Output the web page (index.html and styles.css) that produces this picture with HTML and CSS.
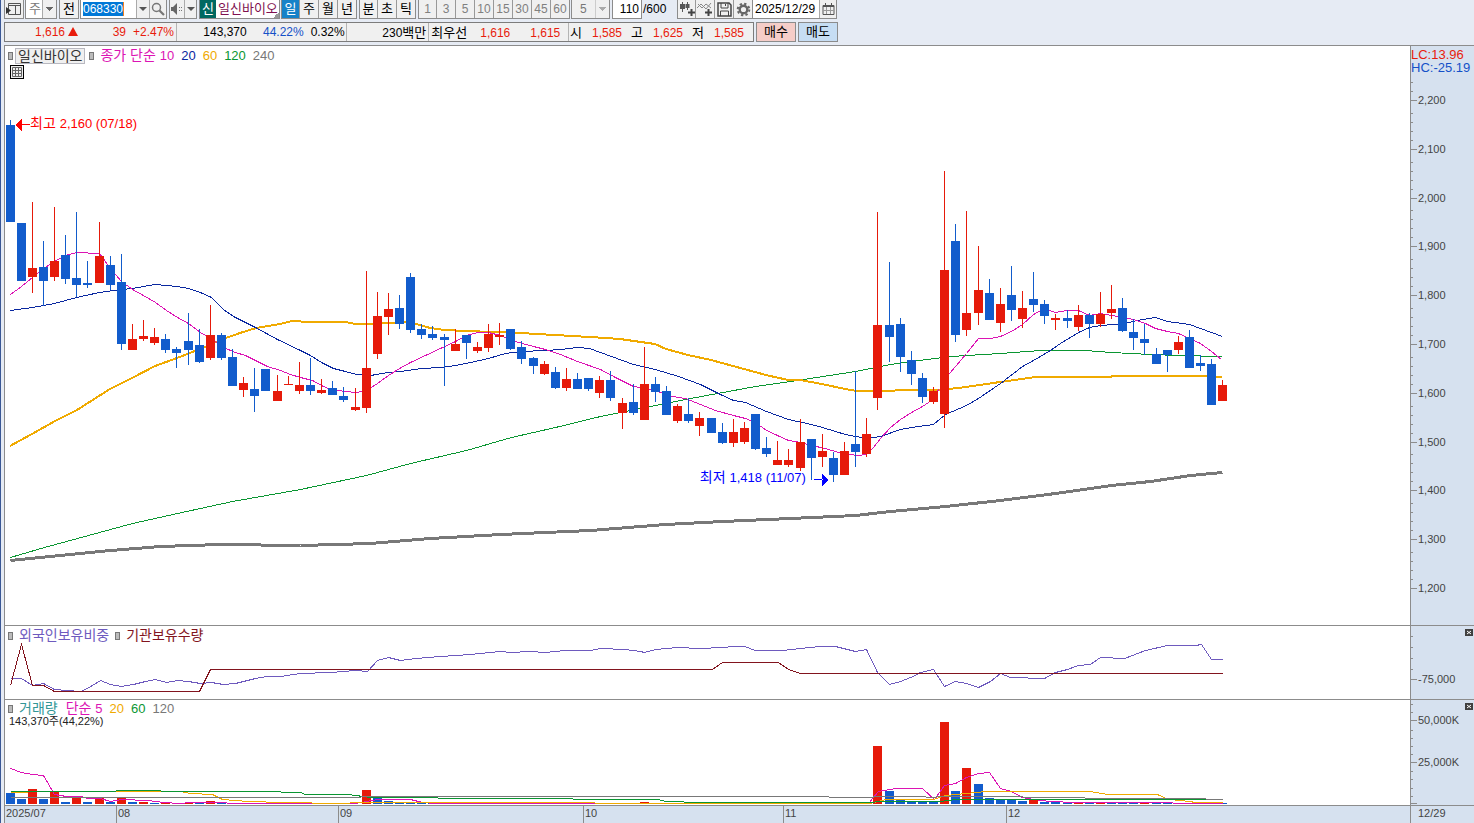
FILE: index.html
```html
<!DOCTYPE html>
<html lang="ko">
<head>
    <meta charset="UTF-8">
    <meta name="viewport" content="width=device-width, initial-scale=1.0">
    <title>일신바이오 - 일봉 차트</title>
    <link rel="stylesheet" href="styles.css">
</head>
<body>
    <header class="toolbar">
        <button type="button" class="tool" aria-label="패널"><svg width="16" height="14" viewBox="0 0 16 14"><path d="M2.500 1.500h12v11h-12zM2.500 3.500h12M9.500 3.500v9" fill="none" stroke="#555"/><path d="M0 5l5 3.500L0 12z" fill="#333"/></svg></button>
        <div class="pick pick-type"><select aria-label="종류"><option>주</option></select></div>
        <button type="button" class="tool tool-all">전</button>
        <div class="code">
            <input type="text" value="068330" aria-label="종목코드">
            <button type="button" class="arrow" aria-label="목록"></button>
            <button type="button" class="find" aria-label="검색"><svg width="14" height="14" viewBox="0 0 14 14" fill="none" stroke="#777"><circle cx="5.500" cy="5.500" r="4" stroke-width="1.500"/><path d="M8.500 8.500l4.500 4.500" stroke-width="2.200"/></svg></button>
        </div>
        <div class="sound">
            <button type="button" class="find" aria-label="소리"><svg width="14" height="14" viewBox="0 0 14 14"><path d="M1 5h2l4-4v12L3 9H1z" fill="#666"/><path d="M9 5h1v1H9zM11 5h1v1h-1zM9 8h1v1H9zM11 8h1v1h-1z" fill="#777"/></svg></button>
            <button type="button" class="arrow" aria-label="소리 설정"></button>
        </div>
        <div class="stock"><span class="stock-badge">신</span><span class="stock-name">일신바이오</span></div>
        <div class="group">
            <button type="button" class="on">일</button><button type="button">주</button><button type="button">월</button><button type="button">년</button>
        </div>
        <div class="group">
            <button type="button">분</button><button type="button">초</button><button type="button">틱</button>
        </div>
        <div class="group group-num">
            <button type="button">1</button><button type="button">3</button><button type="button">5</button><button type="button">10</button><button type="button">15</button><button type="button">30</button><button type="button">45</button><button type="button">60</button>
        </div>
        <div class="pick pick-num"><select aria-label="간격" disabled><option>5</option></select></div>
        <div class="count"><input type="text" value="110" id="count"><label for="count">/600</label></div>
        <div class="group group-icon">
            <button type="button" aria-label="봉 추가"><svg width="16" height="15" viewBox="0 0 16 15"><path d="M3.500 0v10M8.500 0v8" stroke="#555"/><path d="M1 2h5v5H1zM6.500 2h4v4h-4z" fill="#555"/><path d="M12.500 7v7M9 10.500h7" stroke="#444" stroke-width="2"/></svg></button>
            <button type="button" aria-label="지표 추가"><svg width="16" height="15" viewBox="0 0 16 15" fill="none"><path d="M0 6l4-4 5 5 5-6M1 2l4 4 4-4 5 4" stroke="#888"/><path d="M11.500 7v7M8 10.500h7" stroke="#444" stroke-width="2"/></svg></button>
            <button type="button" aria-label="저장"><svg width="15" height="15" viewBox="0 0 15 15" fill="none" stroke="#444"><path d="M1 1h11l2 2v11H1z" stroke-width="1.500"/><path d="M4 1v5h7V1M3.500 14V9h8v5M8.500 2v2"/></svg></button>
            <button type="button" aria-label="설정"><svg width="15" height="15" viewBox="0 0 15 15" fill="none" stroke="#666"><circle cx="7.500" cy="7.500" r="3.800" stroke-width="2.400"/><circle cx="7.500" cy="7.500" r="5.800" stroke-width="2" stroke-dasharray="2.300 2.250"/></svg></button>
        </div>
        <div class="date">
            <input type="text" value="2025/12/29" aria-label="날짜">
            <button type="button" class="find" aria-label="달력"><svg width="13" height="12" viewBox="0 0 13 12" fill="none" stroke="#555"><path d="M1 2.500h11v9H1z"/><path d="M1 3h11" stroke-width="2"/><path d="M3.500 0v3M9.500 0v3"/><path d="M1 7.500h11M4.500 4v7M8.500 4v7" stroke="#999"/></svg></button>
        </div>
    </header>

    <div class="quote">
        <div class="quote-bar">
            <div class="cell cell-price">
                <span class="up">1,616</span><i class="triangle"></i><span class="up diff">39</span><span class="up rate">+2.47%</span>
            </div>
            <div class="cell cell-volume">
                <span class="total">143,370</span><span class="turn">44.22%</span><span class="ratio">0.32%</span>
            </div>
            <div class="cell cell-amount"><span>230<b>백만</b></span></div>
            <div class="cell cell-best">
                <b>최우선</b><span class="up">1,616</span><span class="up">1,615</span>
            </div>
            <div class="cell cell-ohl">
                <b>시</b><span class="up">1,585</span><b>고</b><span class="up">1,625</span><b>저</b><span class="up">1,585</span>
            </div>
        </div>
        <button type="button" class="order buy">매수</button>
        <button type="button" class="order sell">매도</button>
    </div>

    <main class="board">
        <section class="panel panel-price">
            <svg class="plot" id="price" viewBox="5 46 1405 579" preserveAspectRatio="none"></svg>
            <div class="legend">
                <i class="mark"></i><span class="chip">일신바이오</span><i class="mark"></i>
                <span class="ma10">종가 단순 <em>10</em></span><em class="ma20">20</em><em class="ma60">60</em><em class="ma120">120</em><em class="ma240">240</em>
            </div>
            <button type="button" class="grid-button" aria-label="표"><svg width="10" height="10" viewBox="0 0 10 10" fill="none" stroke="#666"><path d="M.5.5h9v9h-9zM3.500 0v10M6.500 0v10M0 3.500h10M0 6.500h10"/></svg></button>
            <span class="note note-high">최고 <em>2,160 (07/18)</em></span>
            <span class="note note-low">최저 <em>1,418 (11/07)</em></span>
        </section>
        <aside class="axis">
            <svg class="scale" id="price-scale"></svg>
            <div class="limits"><span class="lc">LC:13.96</span><span class="hc">HC:-25.19</span></div>
        </aside>

        <section class="panel">
            <svg class="plot" id="holding" viewBox="5 626 1405 73" preserveAspectRatio="none"></svg>
            <div class="legend">
                <i class="mark"></i><span class="foreign">외국인보유비중</span><i class="mark"></i><span class="agency">기관보유수량</span>
            </div>
        </section>
        <aside class="axis">
            <svg class="scale" id="holding-scale"></svg>
            <button type="button" class="close" aria-label="닫기"><svg width="8" height="7" viewBox="0 0 8 7"><path d="M2 2l4 3M6 2L2 5" stroke="#fff"/></svg></button>
        </aside>

        <section class="panel">
            <svg class="plot" id="volume" viewBox="5 700 1405 105" preserveAspectRatio="none"></svg>
            <div class="legend legend-volume">
                <i class="mark"></i><span class="vol">거래량</span><span class="ma10">단순 <em>5</em></span><em class="ma60">20</em><em class="ma120">60</em><em class="ma240">120</em>
            </div>
            <p class="volume-text">143,370주(44,22%)</p>
        </section>
        <aside class="axis">
            <svg class="scale" id="volume-scale"></svg>
            <button type="button" class="close" aria-label="닫기"><svg width="8" height="7" viewBox="0 0 8 7"><path d="M2 2l4 3M6 2L2 5" stroke="#fff"/></svg></button>
        </aside>

        <div class="months">
            <span>2025/07</span><span>08</span><span>09</span><span>10</span><span>11</span><span>12</span>
        </div>
        <div class="today">12/29</div>
    </main>

    <script src="chart.js"></script>
</body>
</html>
```
FILE: styles.css
```css
* {
    box-sizing: border-box;
}
body {
    margin: 0;
    height: 100vh;
    display: flex;
    flex-direction: column;
    overflow: hidden;
    background-color: #e6ebf4;
    border-left: 1px solid #3a5795;
    font-family: "Liberation Sans", "Noto Sans CJK KR", sans-serif;
    font-size: 12px;
    color: #000;
}
button, input, select {
    font: inherit;
    color: inherit;
    margin: 0;
    padding: 0;
    border: 0;
    border-radius: 0;
    background: none;
}
em, i, b {
    font-style: normal;
    font-weight: normal;
}
svg {
    display: block;
}

/* toolbar */
.toolbar {
    display: flex;
    height: 19px;
    padding-left: 3px;
    line-height: 18px;
    white-space: nowrap;
}
.toolbar > div, .tool {
    display: flex;
    flex: none;
    border: 1px solid #8c8c8c;
    border-top: 0;
    background-color: #f0f0f0;
}
.toolbar button {
    display: flex;
    align-items: center;
    justify-content: center;
}
.tool {
    width: 20px;
}
.tool, .pick-type, .stock, .group, .quote b, .order {
    font-size: 13px;
}
.toolbar > .pick {
    position: relative;
    background-color: #fff;
}
.pick select {
    appearance: none;
    width: 100%;
    padding-left: 3px;
    opacity: 1;
    color: #777;
}
.pick::after {
    content: '';
    position: absolute;
    top: 0;
    right: 0;
    width: 13px;
    height: 18px;
    border-left: 1px solid #aaa;
    background: linear-gradient(#666, #666) 3px 7px / 7px 1px no-repeat, linear-gradient(#666, #666) 4px 8px / 5px 1px no-repeat, linear-gradient(#666, #666) 5px 9px / 3px 1px no-repeat, linear-gradient(#666, #666) 6px 10px / 1px 1px no-repeat, #f0f0f0;
    pointer-events: none;
}
.pick-type {
    width: 32px;
    margin: 0 2px 0 1px;
}
.arrow {
    width: 13px;
    border-left: 1px solid #aaa;
    background: #f0f0f0;
}
.arrow::after {
    content: '';
    border: 4px solid transparent;
    border-top-color: #555;
    border-bottom: 0;
}
.toolbar > .code {
    width: 87px;
    margin-left: 1px;
    background-color: #fff;
}
.code input {
    width: 41px;
    height: 14px;
    margin: 2px 12px 0 2px;
    background-color: #0078d7;
    border-right: 1px solid #f08020;
    color: #fff;
}
.find {
    width: 17px;
    border-left: 1px solid #aaa;
    background-color: #f0f0f0;
}
.sound {
    width: 28px;
    margin: 0 2px;
}
.sound .find {
    width: 15px;
    border-left: 0;
}
.stock {
    width: 81px;
}
.stock-badge {
    width: 16px;
    text-align: center;
    background-color: #006860;
    color: #fff;
}
.stock-name {
    flex: 1;
    padding-left: 2px;
    background: linear-gradient(135deg, transparent 50%, #999 50%) right bottom / 6px 6px no-repeat, #fff;
    color: #801050;
}
.group {
    margin-left: 2px;
}
.toolbar .stock + .group {
    margin-left: 1px;
}
.group button {
    width: 19px;
    border-left: 1px solid #999;
}
.group button:first-child {
    width: 17px;
    border-left: 0;
}
.group .on {
    background-color: #1682c8;
    color: #fff;
}
.group-num, .pick-num {
    font-size: 12px;
    color: #808080;
}
.pick-num {
    width: 39px;
    margin: 0 2px 0 1px;
}
.toolbar > .pick-num {
    background-color: #f0f0f0;
}
.pick-num select {
    padding-left: 8px;
}
.pick-num::after {
    opacity: .5;
}
.toolbar > .count {
    width: 65px;
    border-right: 0;
    border-bottom: 0;
    background: none;
}
.count input {
    width: 29px;
    padding-right: 2px;
    border-right: 1px solid #8c8c8c;
    border-bottom: 1px solid #8c8c8c;
    background-color: #fff;
    text-align: right;
}
.count label {
    padding-left: 1px;
}
.group-icon {
    margin-left: 0;
}
.toolbar > .date {
    width: 84px;
    border-left: 0;
    background-color: #fff;
}
.date input {
    width: 66px;
    padding-left: 2px;
}

/* quote */
.quote {
    display: flex;
    padding: 3px 0 3px 3px;
    height: 26px;
    line-height: 19px;
    white-space: nowrap;
}
.quote-bar {
    display: flex;
    width: 750px;
    border: 1px solid #7c7c7c;
    background-color: #f0f0f0;
}
.cell {
    display: flex;
    align-items: baseline;
    border-right: 1px solid #b4b4b4;
}
.cell span {
    text-align: right;
}
.up {
    color: #e81c0c;
}
.cell-price {
    width: 172px;
}
.cell-price .up {
    width: 60px;
}
.triangle {
    width: 10px;
    height: 9px;
    margin-left: 3px;
    background-color: #e81c0c;
    clip-path: polygon(50% 0, 100% 100%, 0 100%);
}
.cell-price .diff, .cell-price .rate {
    width: 48px;
}
.cell-volume {
    width: 171px;
}
.total {
    width: 70px;
}
.turn {
    width: 57px;
    color: #1450c8;
}
.ratio {
    width: 41px;
}
.cell-amount {
    width: 82px;
    justify-content: flex-end;
    padding-right: 2px;
}
.cell-best {
    width: 140px;
    padding-left: 2px;
}
.cell-best b {
    width: 36px;
}
.cell-best span {
    width: 43px;
    margin-right: 7px;
}
.cell-ohl {
    padding-left: 1px;
    border-right: 0;
}
.cell-ohl span {
    width: 40px;
    margin-right: 9px;
}
.cell-ohl b {
    width: 12px;
}
.order {
    width: 40px;
    margin-left: 2px;
    border: 1px solid #8c8c8c;
    line-height: 18px;
}
.buy {
    background-color: #f5cdc8;
}
.sell {
    background-color: #c6ddf3;
}

/* chart */
.board {
    flex: 1;
    min-height: 0;
    display: grid;
    grid-template-columns: minmax(0, 1fr) 64px;
    grid-template-rows: minmax(0, 580fr) minmax(0, 74fr) minmax(0, 106fr) 17px;
    margin-left: 3px;
    border-top: 1px solid #8c8c8c;
    border-left: 1px solid #8c8c8c;
}
.panel {
    position: relative;
    border-bottom: 1px solid #8c8c8c;
    background-color: #fff;
}
.axis {
    position: relative;
    border-left: 1px solid #8c8c8c;
    border-bottom: 1px solid #8c8c8c;
    background-color: #d6e1ef;
}
.plot, .scale {
    position: absolute;
    width: 100%;
    height: 100%;
}
.plot {
    shape-rendering: crispEdges;
}
.plot polyline {
    fill: none;
}
.scale text {
    font-size: 11px;
    fill: #444;
}
.scale line {
    stroke: #8c8c8c;
    shape-rendering: crispEdges;
}
.legend {
    position: relative;
    display: flex;
    align-items: baseline;
    height: 18px;
    padding: 2px 0 0 3px;
    font-size: 14px;
    line-height: 14px;
    white-space: nowrap;
}
.legend em, .note em {
    font-size: 13px;
}
.legend > em {
    margin-left: 7px;
}
.mark {
    width: 5px;
    height: 8px;
    margin-right: 6px;
    align-self: center;
    border: 1px solid #777;
    background-color: #bbb;
}
.chip {
    height: 16px;
    margin: 0 4px 0 -4px;
    padding: 0 2px;
    align-self: center;
    border: 1px solid #b8b8c0;
    background-color: #f0f0f0;
    color: #333;
}
.ma10 { color: #dc14b4; }
.ma20 { color: #0a28a0; }
.ma60 { color: #f0aa00; }
.ma120 { color: #0a9632; }
.ma240 { color: #787878; }
.foreign {
    margin-right: 6px;
    color: #6e5abe;
}
.agency { color: #82141e; }
.legend-volume {
    height: 16px;
    padding-top: 1px;
}
.vol {
    margin-right: 8px;
    color: #329696;
}
.grid-button {
    position: absolute;
    top: 19px;
    left: 5px;
    width: 14px;
    height: 14px;
    padding: 1px;
    border: 1px solid #000;
    background-color: #eee;
}
.note {
    position: absolute;
    font-size: 14px;
    line-height: 16px;
    white-space: nowrap;
}
.note-high {
    left: 25px;
    top: 12%;
    color: #f00;
}
.note-low {
    right: 43%;
    top: 73%;
    color: #00f;
}
.volume-text {
    position: absolute;
    top: 16px;
    left: 4px;
    margin: 0;
    font-size: 11px;
    line-height: 11px;
    color: #222;
}
.limits {
    position: relative;
    display: flex;
    flex-direction: column;
    padding-top: 2px;
    font-size: 13px;
    line-height: 13px;
    white-space: nowrap;
}
.lc { color: #e81c0c; }
.hc { color: #1450c8; }
.close {
    position: absolute;
    top: 3px;
    right: 1px;
    width: 8px;
    height: 7px;
    background-color: #404040;
}
.months {
    display: grid;
    grid-template-columns: 111fr 222fr 245fr 200fr 223fr 404fr;
    background-color: #d6e1ef;
    font-size: 11px;
    line-height: 15px;
    color: #444;
}
.months span {
    padding-left: 1px;
    border-left: 1px solid #8c8c8c;
}
.months span:first-child {
    border-left: 0;
}
.today {
    padding-left: 7px;
    border-left: 1px solid #8c8c8c;
    background-color: #d6e1ef;
    font-size: 11px;
    line-height: 15px;
    color: #444;
}
```
FILE: chart.js
```js
const RED = '#e61a0a';
const BLUE = '#125ccc';

// color, high, body top, body bottom, low
const candles = `b 120 125 222 222|b 223 223 281 281|r 202 268 277 293|b 241 267 281 306|r 207 261 277 281
b 235 255 279 284|b 212 278 285 297|b 261 283 285 288|r 222 256 283 283|b 256 265 285 290
b 254 282 344 350|r 324 339 350 350|r 320 336 339 341|r 328 337 343 345|b 334 339 350 353
b 347 349 353 368|b 313 341 350 365|b 329 345 362 363|r 305 335 358 360|b 333 335 358 360
b 349 357 386 386|r 377 383 390 397|b 368 389 396 412|b 369 369 391 391|r 375 391 401 401
r 376 384 385 385|r 362 385 391 394|b 358 385 391 395|r 379 390 393 394|b 381 388 395 395
b 387 396 400 402|r 388 407 410 411|r 271 368 408 413|r 292 316 354 359|r 293 309 317 335
b 295 308 324 329|b 273 277 330 333|b 324 329 335 339|b 326 334 338 340|b 334 337 340 386
r 329 344 351 351|b 335 335 343 359|r 342 347 351 353|r 324 334 348 352|r 323 335 337 345
b 329 329 349 350|b 341 347 359 364|b 357 358 366 374|r 361 364 374 375|b 367 372 388 389
r 368 379 388 391|b 373 379 389 389|b 378 378 389 391|r 376 380 393 398|b 371 380 398 401
r 398 403 413 429|b 384 402 413 415|r 347 384 420 420|b 377 384 392 402|b 386 391 415 415
r 404 406 421 423|b 398 414 421 423|r 412 418 426 436|b 418 418 433 433|b 423 432 443 444
r 419 432 443 447|r 422 428 442 444|b 414 414 449 450|b 437 448 454 457|r 441 460 465 465
r 449 460 465 467|r 419 442 468 471|b 439 439 458 480|r 434 451 457 467|b 452 458 475 482
r 442 451 475 475|b 371 444 452 467|r 418 434 454 457|r 212 325 398 410|b 262 325 337 362
b 318 324 357 372|b 351 360 374 385|b 373 378 397 403|r 387 391 402 404|r 171 270 414 428
b 224 241 335 342|r 211 313 330 336|r 246 290 313 325|b 279 293 320 320|r 288 304 323 332
b 266 295 310 321|r 291 308 319 328|b 272 299 305 312|b 300 304 316 324|r 314 318 320 330
b 310 318 321 328|r 305 315 327 331|b 313 315 324 338|r 292 314 324 327|r 285 309 313 319
b 298 308 331 332|b 319 332 338 350|b 324 339 343 355|b 348 354 364 364|b 350 350 355 372
r 336 342 350 354|b 330 337 368 368|b 355 363 366 371|b 359 364 405 405|r 380 385 401 401`
    .split(/[|\n]/).map(row => row.trim().split(' '));

// index, color, bar top
const volumes = `0 b 793|1 b 799|2 r 789|3 b 799|4 r 792|5 b 802|6 r 796|7 b 802|8 r 798|9 b 802|10 r 798|11 b 802
12 r 802|13 b 803|14 r 803|15 b 803|16 r 803|17 b 803|18 r 801|19 b 803|20 r 803|21 b 803|22 r 803|32 r 790|33 b 797
34 b 801|35 b 802|36 b 802|37 b 803|38 b 803|57 r 802|78 r 746|79 b 791|80 b 800|81 b 802|82 b 802|83 b 802
84 r 722|85 b 791|86 r 768|87 b 784|88 b 798|89 b 800|90 b 800|91 b 801|92 r 800|93 b 802|94 b 802|95 b 802
96 r 803|97 b 803|98 r 803|99 b 803|100 b 803|101 b 803|102 r 803|103 b 803|104 b 803|109 b 803`
    .split(/[|\n]/).map(row => row.trim().split(' '));

const average = {
    ma240: '10,560 60,555 110,550 160,546 220,544 300,545 370,543 430,538 500,534 590,530 665,524 722,521 790,518 855,515 890,511 945,506 1000,500 1055,493 1111,485 1150,481 1190,475 1222,472',
    ma120: '10,557 44,547 88,535 132,523 177,513 232,501 300,489 366,475 410,463 466,450 511,437 555,427 600,416 655,405 690,398 755,386 790,381 855,371 890,364 911,361 950,356 1000,353 1040,350 1085,350 1111,352 1150,354 1178,355 1222,356',
    ma60: '10,446 21,440 32,434 55,421 77,410 88,403 110,389 132,378 155,366 177,358 200,349 223,339 240,333 256,328 280,324 292,321 310,322 345,322 356,324 370,324 410,322 430,328 445,330 466,331 520,333 555,335 590,337 620,339 655,344 666,349 688,355 711,360 733,366 766,375 788,380 800,380 822,384 845,389 857,391 880,391 911,390 940,390 966,387 1000,382 1022,379 1035,377 1111,377 1112,376 1200,376 1222,377',
    ma20: '10,310 32,307 54,303 76,297 99,292 121,289 132,288 143,286 155,284 166,285 177,286 188,288 200,292 211,297 223,309 233,316 255,327 277,339 300,350 310,355 321,362 333,368 345,371 356,374 370,375 388,372 400,371 421,368 440,367 455,365 470,362 488,358 505,353 520,351 545,350 560,349 577,347 589,348 600,352 622,360 633,364 655,369 678,376 700,384 722,395 733,400 745,402 766,411 788,419 811,424 822,427 845,434 866,438 880,436 900,429 911,427 933,424 945,414 966,405 978,398 1000,383 1022,366 1033,360 1050,350 1060,343 1078,332 1089,327 1100,325 1125,323 1136,320 1155,317 1167,321 1189,324 1211,332 1222,336',
    ma10: '10,294 21,286 32,277 43,268 54,261 65,255 76,252 99,253 110,268 121,281 132,289 143,295 155,302 166,310 177,317 188,323 200,332 212,339 223,347 235,352 245,355 267,366 280,370 290,374 300,377 312,380 323,386 330,389 345,391 356,392 366,390 377,383 388,375 399,368 410,362 425,355 440,348 455,341 466,335 477,332 488,332 500,335 511,340 522,343 533,346 545,349 560,354 577,361 600,369 615,377 633,386 645,388 660,392 672,396 685,398 700,404 715,410 733,415 745,418 755,422 766,430 777,435 788,440 800,442 811,445 825,448 838,452 850,454 857,455 866,454 873,447 880,438 890,427 900,419 911,412 922,406 928,402 939,388 949,373 955,366 966,353 978,338 990,338 1000,336 1011,331 1022,324 1033,314 1044,308 1055,312 1067,310 1078,310 1089,315 1100,313 1111,315 1125,317 1136,320 1145,323 1155,328 1167,331 1178,333 1189,338 1200,343 1211,351 1221,359'
};
const foreign = '10,678 21,678 32,685 43,683 54,689 66,690 80,691 87,688 100,680 110,684 121,686 133,684 145,681 155,679 166,682 177,680 188,681 200,683 211,682 223,684 235,683 255,678 267,676 280,676 300,673 330,672 355,670 367,671 377,660 388,657 400,660 415,658 440,656 470,654 490,652 500,651 510,652 530,651 545,652 565,650 590,650 600,648 625,649 640,651 644,652 655,649 677,647 700,648 722,647 733,646 744,646 755,650 782,650 800,648 820,646 835,646 855,651 866,649 877,672 889,684 900,681 915,675 920,672 933,669 944,686 955,681 966,683 978,687 990,681 1000,673 1010,677 1044,678 1055,672 1067,669 1078,665 1090,664 1100,657 1124,658 1145,650 1167,645 1195,645 1201,644 1211,659 1222,659';
const agency = '10,685 21,644 32,685 43,685 54,691 199,691 210,669 712,669 722,662 778,662 788,669 800,673 1222,673';
const volumeAverage = {
    ma10: '10,768 21,772 32,774 43,775 54,794 66,796 80,796 88,798 100,798 110,801 121,799 148,800 163,802 180,803 190,802 260,803 355,803 366,801 377,799 410,799 422,802 435,803 868,803 878,791 895,788 922,788 934,799 944,785 955,783 966,777 978,773 989,772 1000,788 1011,791 1022,797 1033,799 1050,801 1074,802 1172,802 1173,803 1222,803',
    ma60: '10,792 27,792 28,791 180,791 190,793 212,794 222,799 248,801 283,802 340,803 360,802 594,802 595,803 870,803 885,799 933,799 945,795 966,793 985,791 1090,791 1107,794 1157,794 1168,799 1180,800 1196,802 1222,802',
    ma120: '10,791 115,791 116,790 160,790 161,791 260,791 300,792 305,794 348,794 370,797 437,797 438,798 572,798 573,799 658,799 665,801 683,801 684,802 870,802 880,801 940,801 955,799 1205,799',
    ma240: '10,797 360,797 361,796 828,796 829,797 870,797 876,796 925,796 926,797 945,796 1015,796 1030,797 1084,797 1085,798 1205,798 1206,799 1222,799'
};

const colors = { ma10: '#dc14b4', ma20: '#0a28a0', ma60: '#f0aa00', ma120: '#0a9632', ma240: '#787878' };
const widths = { ma60: 2, ma240: 3 };

const barX = i => Math.floor(10.1 + i * 11.126);
const fill = c => c === 'r' ? RED : BLUE;
const rect = (x, y, w, h, c) => `<rect x="${x}" y="${y}" width="${w}" height="${h}" fill="${c}"/>`;
const line = (points, color, width = 1) => {
    const shift = width === 2 ? 0 : 0.5;
    return `<polyline transform="translate(${shift} ${shift})" points="${points}" stroke="${color}" stroke-width="${width}"/>`;
};

// price
document.getElementById('price').innerHTML =
    Object.entries(average).map(([key, points]) => line(points, colors[key], widths[key])).join('') +
    candles.map(([c, high, top, bottom, low], i) =>
        rect(barX(i), high, 1, low - high, fill(c)) + rect(barX(i) - 4, top, 9, bottom - top, fill(c))
    ).join('') +
    '<path d="M15 125l7-6v12zM22 124h8v1h-8z" fill="#f00"/>' +
    '<path d="M829 480l-7-6v12zM814 479h9v1h-9z" fill="#00f"/>';

// holdings
document.getElementById('holding').innerHTML = line(foreign, '#6e5abe') + line(agency, '#82141e');

// volume
document.getElementById('volume').innerHTML =
    volumes.map(([i, c, top]) => rect(barX(i) - 4, top, 9, 804 - top, fill(c))).join('') +
    ['ma10', 'ma60', 'ma120', 'ma240'].map(key => line(volumeAverage[key], colors[key])).join('');

// scales: ticks are placed in percent so they follow the panel height
function drawScale(id, top, height, major, minor) {
    const percent = y => (y - top) / height * 100 + '%';
    document.getElementById(id).innerHTML =
        minor.map(y => `<line x1="0" x2="2" y1="${percent(y + 0.5)}" y2="${percent(y + 0.5)}"/>`).join('') +
        major.map(([y, label]) =>
            `<line x1="0" x2="6" y1="${percent(y + 0.5)}" y2="${percent(y + 0.5)}"/>` +
            `<text x="7" y="${percent(y)}" dy="4">${label}</text>`
        ).join('');
}

const prices = [];
const priceMinor = [];
for (let i = 0; i <= 10; i++) {
    const y = Math.round(100 + i * 48.8);
    prices.push([y, (2200 - i * 100).toLocaleString('en-US')]);
    for (let k = 1; k <= (i ? 4 : 2); k++) priceMinor.push(y - k * 9);
}
drawScale('price-scale', 46, 579, prices, priceMinor);
drawScale('holding-scale', 626, 73, [[679, '-75,000']], [636, 647, 658, 669]);
drawScale('volume-scale', 700, 105, [[720, '50,000K'], [762, '25,000K'], [803, '']], [704, 712, 730, 738, 746, 754, 771, 779, 788, 796]);
```
